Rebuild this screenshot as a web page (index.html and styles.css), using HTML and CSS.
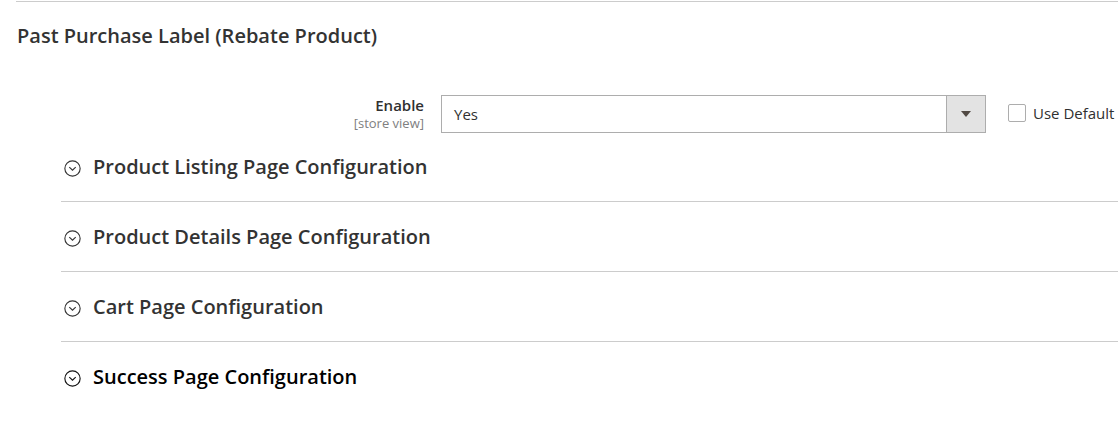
FILE: index.html
```html
<!DOCTYPE html>
<html>
<head>
<meta charset="utf-8">
<link rel="stylesheet" href="styles.css">
</head>
<body>
<div class="page">
  <div class="group">
    <h3 class="group-title">Past Purchase Label (Rebate Product)</h3>
    <div class="field">
      <div class="field-label">
        <span class="label-main">Enable</span>
        <span class="label-scope">[store view]</span>
      </div>
      <div class="select">
        <span class="select-value">Yes</span>
        <span class="select-btn"><span class="tri"></span></span>
      </div>
      <label class="use-default">
        <span class="checkbox"></span>
        <span>Use Default</span>
      </label>
    </div>
    <div class="sections">
      <div class="section">
        <svg class="icon" viewBox="0 0 18 18" width="17" height="17"><circle cx="9" cy="9" r="8.1" fill="none" stroke="#333" stroke-width="1.2"/><path d="M5.6 7.6 L9 10.8 L12.4 7.6" fill="none" stroke="#333" stroke-width="1.2"/></svg>
        <span class="section-title">Product Listing Page Configuration</span>
      </div>
      <div class="section">
        <svg class="icon" viewBox="0 0 18 18" width="17" height="17"><circle cx="9" cy="9" r="8.1" fill="none" stroke="#333" stroke-width="1.2"/><path d="M5.6 7.6 L9 10.8 L12.4 7.6" fill="none" stroke="#333" stroke-width="1.2"/></svg>
        <span class="section-title">Product Details Page Configuration</span>
      </div>
      <div class="section">
        <svg class="icon" viewBox="0 0 18 18" width="17" height="17"><circle cx="9" cy="9" r="8.1" fill="none" stroke="#333" stroke-width="1.2"/><path d="M5.6 7.6 L9 10.8 L12.4 7.6" fill="none" stroke="#333" stroke-width="1.2"/></svg>
        <span class="section-title">Cart Page Configuration</span>
      </div>
      <div class="section section-last">
        <svg class="icon" viewBox="0 0 18 18" width="17" height="17"><circle cx="9" cy="9" r="8.1" fill="none" stroke="#111" stroke-width="1.2"/><path d="M5.6 7.6 L9 10.8 L12.4 7.6" fill="none" stroke="#111" stroke-width="1.2"/></svg>
        <span class="section-title dark">Success Page Configuration</span>
      </div>
    </div>
  </div>
</div>
</body>
</html>
```
FILE: styles.css
```css
html, body {
  margin: 0;
  padding: 0;
  background: #fff;
}
body {
  font-family: "Open Sans", "Liberation Sans", sans-serif;
  color: #303030;
  width: 1118px;
  height: 445px;
  overflow: hidden;
}
.page {
  padding-top: 1px;
  padding-left: 16px;
}
.group {
  border-top: 1px solid #cccccc;
}
.group-title {
  margin: 0;
  padding: 21px 0 0 1px;
  font-size: 20px;
  font-weight: 600;
  line-height: 26px;
  color: #333;
}
.field {
  display: flex;
  align-items: flex-start;
  margin-top: 46px;
}
.field-label {
  width: 408px;
  display: flex;
  flex-direction: column;
  align-items: flex-end;
  padding-top: 1px;
}
.label-main {
  font-size: 15px;
  font-weight: 600;
  line-height: 18px;
  color: #303030;
}
.label-scope {
  margin-top: 2px;
  font-size: 13px;
  line-height: 14px;
  color: #808080;
}
.select {
  margin-left: 17px;
  width: 543px;
  height: 36px;
  border: 1px solid #adadad;
  display: flex;
  align-items: stretch;
}
.select-value {
  flex: 1;
  padding-left: 12px;
  font-size: 15px;
  line-height: 36px;
  color: #303030;
}
.select-btn {
  width: 38px;
  background: #e3e3e3;
  border-left: 1px solid #adadad;
  display: flex;
  align-items: center;
  justify-content: center;
}
.tri {
  width: 0;
  height: 0;
  border-left: 5px solid transparent;
  border-right: 5px solid transparent;
  border-top: 6px solid #514943;
}
.use-default {
  display: flex;
  align-items: center;
  margin-left: 22px;
  height: 36px;
  font-size: 15px;
  color: #303030;
  white-space: nowrap;
}
.checkbox {
  flex: none;
  width: 16px;
  height: 16px;
  border: 1px solid #adadad;
  border-radius: 2px;
  background: #fff;
  margin-right: 7px;
}
.sections {
  margin-left: 45px;
  margin-top: -1px;
}
.section {
  display: flex;
  align-items: center;
  height: 69px;
  border-bottom: 1px solid #cccccc;
}
.section-last {
  border-bottom: none;
}
.icon {
  display: block;
  margin-left: 3px;
  margin-right: 12px;
  margin-top: 4px;
}
.section-title {
  font-size: 20px;
  font-weight: 600;
  line-height: 26px;
  color: #333;
  padding-top: 1px;
}
.section-title.dark {
  color: #000;
}
```
